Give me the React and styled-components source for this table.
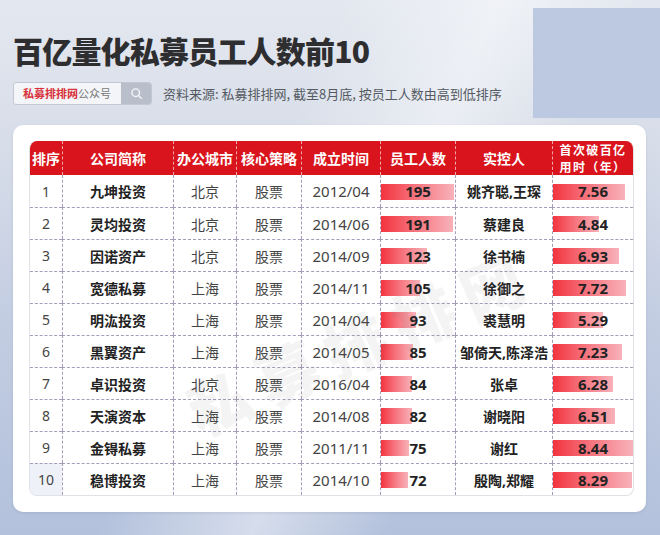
import React from "react";
import styled, { createGlobalStyle } from "styled-components";

const Global = createGlobalStyle`
  html, body { margin: 0; padding: 0; }
  body {
    width: 660px; height: 535px; overflow: hidden;
    font-family: "Noto Sans", "Noto Sans CJK SC", sans-serif;
  }
`;

const Page = styled.div`
  position: relative;
  width: 660px;
  height: 535px;
  overflow: hidden;
  box-sizing: border-box;
  padding: 32px 14px 0 13px;
  background:
    linear-gradient(115deg, rgba(255,255,255,0) 38%, rgba(255,255,255,0.45) 55%, rgba(255,255,255,0) 70%),
    linear-gradient(180deg, #e4e8f0 0%, #d8dee9 25%, #c3cde2 60%, #b3c1dc 100%);
  display: flex;
  flex-direction: column;
`;

const Deco = styled.div`
  position: absolute;
  left: 533px;
  top: 8px;
  width: 127px;
  height: 110px;
  background: #bcc9e1;
`;

const Title = styled.h1`
  position: relative;
  margin: 0;
  font-family: "Noto Sans CJK SC", sans-serif;
  font-weight: 900;
  font-size: 30px;
  letter-spacing: -0.8px;
  line-height: 36px;
  color: #2e2e30;
`;

const InfoRow = styled.div`
  position: relative;
  display: flex;
  align-items: center;
  gap: 11px;
  margin-top: 14px;
  height: 22px;
`;

const SearchBox = styled.div`
  display: flex;
  height: 21px;
  border: 1px solid #c2c8d4;
  border-radius: 3px;
  overflow: hidden;
  background: #f3f5f9;
`;

const SearchInput = styled.div`
  width: 98px;
  padding-left: 9px;
  display: flex;
  align-items: center;
  font-family: "Noto Sans CJK SC", sans-serif;
  font-size: 11px;
  color: #777;
  b { color: #d8323b; font-weight: 700; }
`;

const SearchBtn = styled.div`
  width: 30px;
  background: #b9bfca;
  display: flex;
  align-items: center;
  justify-content: center;
`;

const Source = styled.div`
  font-family: "Noto Sans CJK SC", sans-serif;
  font-size: 13px;
  color: #555a62;
`;

const Card = styled.div`
  position: relative;
  margin-top: 21px;
  width: 633px;
  height: 387px;
  box-sizing: border-box;
  background: #fff;
  border-radius: 10px;
  padding: 16px 14px 0 16px;
  box-shadow: 0 1px 3px rgba(80, 90, 120, 0.15);
`;

const Table = styled.table`
  border-collapse: separate;
  border-spacing: 0;
  table-layout: fixed;
  width: 603px;
  border-radius: 8px;
  overflow: hidden;
  border: 1px solid #dfe1e6;
  border-top: none;
`;

const Th = styled.th`
  height: 34px;
  padding: 0;
  background: #d9141c;
  color: #fff;
  font-family: "Noto Sans CJK SC", sans-serif;
  font-weight: 700;
  font-size: 14px;
  line-height: 20px;
  text-align: center;
  border-left: ${(p) => (p.$first ? "none" : "1px dashed #f0a8ab")};
  box-sizing: border-box;
`;

const ThLine = styled.span`
  display: block;
  font-size: 12px;
  line-height: 17px;
  letter-spacing: 1.4px;
`;

const Td = styled.td`
  height: 32px;
  padding: 0;
  box-sizing: border-box;
  text-align: center;
  font-family: "Noto Sans", "Noto Sans CJK SC", sans-serif;
  font-size: ${(p) => (p.$num ? "15px" : "14px")};
  font-weight: ${(p) => (p.$bold ? 700 : 400)};
  color: ${(p) => (p.$bold ? "#222" : "#444")};
  border-left: ${(p) => (p.$first ? "none" : "1px dashed #a69cba")};
  border-top: ${(p) => (p.$top ? "none" : "1px dashed #a69cba")};
  background: ${(p) => (p.$hl ? "#eef2f8" : "transparent")};
  white-space: nowrap;
  overflow: hidden;
`;

const BarCell = styled.div`
  position: relative;
  height: 31px;
  display: flex;
  align-items: center;
  justify-content: center;
`;

const Bar = styled.div`
  position: absolute;
  left: 0;
  top: 8px;
  height: 16px;
  background: linear-gradient(90deg, #f2343f 0%, #f6717b 45%, #f8b2ba 100%);
`;

const BarText = styled.span`
  position: relative;
  font-family: "Noto Sans", sans-serif;
  font-weight: 700;
  font-size: 15px;
  color: #222;
`;

const Watermark = styled.div`
  position: absolute;
  left: 360px;
  top: 340px;
  transform: translate(-50%, -50%) rotate(-23deg);
  font-family: "Noto Sans CJK SC", sans-serif;
  font-weight: 900;
  font-size: 62px;
  letter-spacing: 12px;
  color: rgba(110, 110, 120, 0.08);
  white-space: nowrap;
  pointer-events: none;
`;

const rows = [
  [1, "九坤投资", "北京", "股票", "2012/04", 195, "姚齐聪,王琛", "7.56"],
  [2, "灵均投资", "北京", "股票", "2014/06", 191, "蔡建良", "4.84"],
  [3, "因诺资产", "北京", "股票", "2014/09", 123, "徐书楠", "6.93"],
  [4, "宽德私募", "上海", "股票", "2014/11", 105, "徐御之", "7.72"],
  [5, "明汯投资", "上海", "股票", "2014/04", 93, "裘慧明", "5.29"],
  [6, "黑翼资产", "上海", "股票", "2014/05", 85, "邹倚天,陈泽浩", "7.23"],
  [7, "卓识投资", "北京", "股票", "2016/04", 84, "张卓", "6.28"],
  [8, "天演资本", "上海", "股票", "2014/08", 82, "谢晓阳", "6.51"],
  [9, "金锝私募", "上海", "股票", "2011/11", 75, "谢红", "8.44"],
  [10, "稳博投资", "上海", "股票", "2014/10", 72, "殷陶,郑耀", "8.29"],
];

const widths = [32, 111, 63, 65, 79, 75, 97, 81];

const SearchIcon = () => (
  <svg width="13" height="13" viewBox="0 0 24 24" fill="none" stroke="#f4f6f9" strokeWidth="2.6" strokeLinecap="round">
    <circle cx="10.5" cy="10.5" r="7" />
    <path d="M16 16l5 5" />
  </svg>
);

export default function App() {
  return (
    <>
      <Global />
      <Page>
        <Deco />
        <Title>百亿量化私募员工人数前10</Title>
        <InfoRow>
          <SearchBox>
            <SearchInput>
              <b>私募排排网</b>公众号
            </SearchInput>
            <SearchBtn>
              <SearchIcon />
            </SearchBtn>
          </SearchBox>
          <Source>资料来源: 私募排排网, 截至8月底, 按员工人数由高到低排序</Source>
        </InfoRow>
        <Card>
          <Table>
            <colgroup>
              {widths.map((w, i) => (
                <col key={i} style={{ width: w }} />
              ))}
            </colgroup>
            <thead>
              <tr>
                <Th $first>排序</Th>
                <Th>公司简称</Th>
                <Th>办公城市</Th>
                <Th>核心策略</Th>
                <Th>成立时间</Th>
                <Th>员工人数</Th>
                <Th>实控人</Th>
                <Th>
                  <ThLine>首次破百亿</ThLine>
                  <ThLine>用时（年）</ThLine>
                </Th>
              </tr>
            </thead>
            <tbody>
              {rows.map((r, i) => (
                <tr key={r[0]}>
                  <Td $first $top={i === 0} $hl={i === 9}>{r[0]}</Td>
                  <Td $top={i === 0} $bold>{r[1]}</Td>
                  <Td $top={i === 0}>{r[2]}</Td>
                  <Td $top={i === 0}>{r[3]}</Td>
                  <Td $top={i === 0} $num>{r[4]}</Td>
                  <Td $top={i === 0}>
                    <BarCell>
                      <Bar style={{ width: `${(r[5] / 195) * 73}px` }} />
                      <BarText>{r[5]}</BarText>
                    </BarCell>
                  </Td>
                  <Td $top={i === 0} $bold>{r[6]}</Td>
                  <Td $top={i === 0}>
                    <BarCell>
                      <Bar style={{ width: `${(parseFloat(r[7]) / 8.44) * 80}px` }} />
                      <BarText>{r[7]}</BarText>
                    </BarCell>
                  </Td>
                </tr>
              ))}
            </tbody>
          </Table>
        </Card>
        <Watermark>私募排排网</Watermark>
      </Page>
    </>
  );
}
